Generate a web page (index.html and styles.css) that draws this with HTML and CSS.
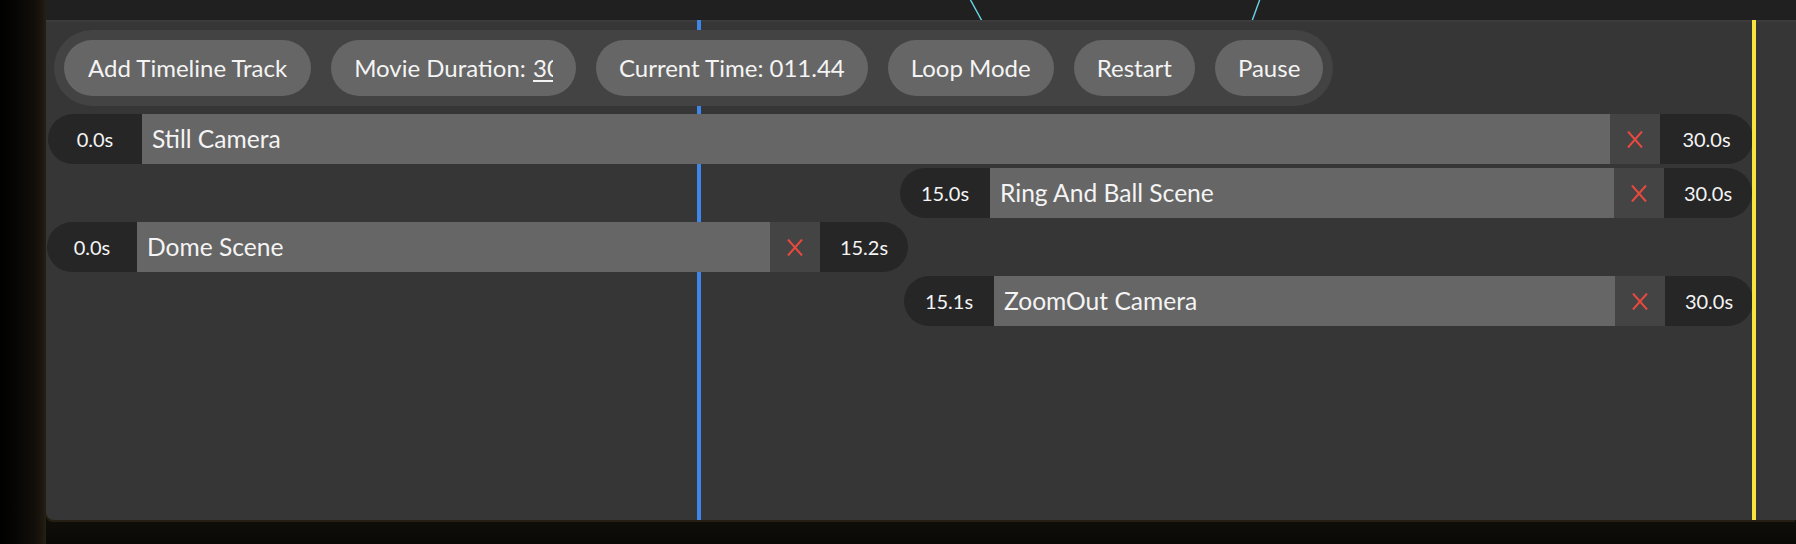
FILE: index.html
```html
<!DOCTYPE html>
<html lang="en">
<head>
<meta charset="utf-8">
<title>Timeline</title>
<link rel="stylesheet" href="styles.css">
</head>
<body>
<div class="app">
  <div class="side"></div>
  <div class="main">
    <div class="scene">
      <svg class="scene-lines" width="1750" height="20" viewBox="0 0 1750 20">
        <line x1="924" y1="-1" x2="936" y2="21" />
        <line x1="1214" y1="-1" x2="1206" y2="21" />
      </svg>
    </div>
    <div class="panel">
      <div class="playhead"></div>
      <div class="end-marker"></div>
      <div class="toolbar">
        <button class="btn">Add Timeline Track</button>
        <div class="btn">Movie Duration: <span class="duration-input">30.00</span></div>
        <div class="btn">Current Time: 011.44</div>
        <button class="btn">Loop Mode</button>
        <button class="btn">Restart</button>
        <button class="btn">Pause</button>
      </div>
      <div class="tracks">
        <div class="row">
          <div class="track track--wide" style="margin-left:2px;width:1705px">
            <div class="time time--start">0.0s</div>
            <div class="name">Still Camera</div>
            <div class="remove"><svg width="16" height="17" viewBox="0 0 16 17"><path d="M1 0.5 L15 16.5 M15 0.5 L1 16.5"/></svg></div>
            <div class="time time--end">30.0s</div>
          </div>
        </div>
        <div class="row">
          <div class="track" style="margin-left:854px;width:852px">
            <div class="time time--start">15.0s</div>
            <div class="name">Ring And Ball Scene</div>
            <div class="remove"><svg width="16" height="17" viewBox="0 0 16 17"><path d="M1 0.5 L15 16.5 M15 0.5 L1 16.5"/></svg></div>
            <div class="time time--end">30.0s</div>
          </div>
        </div>
        <div class="row">
          <div class="track" style="margin-left:1px;width:861px">
            <div class="time time--start">0.0s</div>
            <div class="name">Dome Scene</div>
            <div class="remove"><svg width="16" height="17" viewBox="0 0 16 17"><path d="M1 0.5 L15 16.5 M15 0.5 L1 16.5"/></svg></div>
            <div class="time time--end">15.2s</div>
          </div>
        </div>
        <div class="row">
          <div class="track" style="margin-left:858px;width:849px">
            <div class="time time--start">15.1s</div>
            <div class="name">ZoomOut Camera</div>
            <div class="remove"><svg width="16" height="17" viewBox="0 0 16 17"><path d="M1 0.5 L15 16.5 M15 0.5 L1 16.5"/></svg></div>
            <div class="time time--end">30.0s</div>
          </div>
        </div>
      </div>
    </div>
    <div class="below"></div>
  </div>
</div>
</body>
</html>
```
FILE: styles.css
```css
* { box-sizing: border-box; }
html, body { margin: 0; padding: 0; }
body {
  width: 1796px;
  height: 544px;
  overflow: hidden;
  background: #0d0b07;
  font-family: "Lato", "Noto Sans", sans-serif;
  color: #f4f4f4;
}
.app { display: flex; height: 544px; }
.side {
  width: 46px;
  flex: none;
  background: linear-gradient(to right, #000 0%, #070604 35%, #120e09 75%, #1b160e 90%, #262014 100%);
}
.main { flex: 1; display: flex; flex-direction: column; min-width: 0; }
.scene { height: 20px; background: #202020; position: relative; overflow: hidden; }
.scene-lines { display: block; }
.scene-lines line { stroke: #68d6e6; stroke-width: 1.4; }
.panel {
  position: relative;
  height: 500px;
  background: #363636;
  border-top: 2px solid #3c3c3c;
  border-bottom-left-radius: 8px;
  box-shadow: -1px 2px 0 #241e13;
  padding: 8px 0 0 8px;
}
.below {
  flex: 1;
  background: linear-gradient(to bottom, #100e09, #0a0906);
}
.playhead {
  position: absolute;
  left: 651px;
  top: -2px;
  bottom: 0;
  width: 4px;
  background: #3f86ec;
}
.end-marker {
  position: absolute;
  left: 1706px;
  top: -2px;
  bottom: 0;
  width: 4px;
  background: #f7e43c;
  z-index: 3;
}
.toolbar {
  position: relative;
  z-index: 1;
  display: inline-flex;
  gap: 20px;
  padding: 10px;
  background: #434343;
  border-radius: 38px;
}
.btn {
  height: 56px;
  display: flex;
  align-items: center;
  padding: 0 23px 2px;
  border: none;
  border-radius: 28px;
  background: #666;
  color: #f4f4f4;
  font-family: inherit;
  font-size: 24px;
  white-space: pre;
}
.btn:first-child { padding: 0 24px 2px 24px; }
.duration-input {
  display: inline-block;
  width: 20px;
  overflow: hidden;
  text-decoration: underline;
  text-decoration-thickness: 2px;
  text-underline-offset: 3px;
  vertical-align: bottom;
  margin-left: 1px;
}
.tracks {
  position: relative;
  z-index: 2;
  margin: 8px 0 0 -8px;
  display: flex;
  flex-direction: column;
  gap: 4px;
}
.row { display: flex; height: 50px; }
.track { display: flex; height: 50px; flex: none; }
.time {
  flex: none;
  width: 90px;
  display: flex;
  align-items: center;
  justify-content: center;
  padding-bottom: 1px;
  background: #262626;
  font-size: 20px;
}
.time--start { border-radius: 25px 0 0 25px; }
.time--end { width: 88px; border-radius: 0 25px 25px 0; }
.track--wide .time--start { width: 94px; }
.track--wide .time--end { width: 93px; }
.name {
  flex: 1;
  min-width: 0;
  display: flex;
  align-items: center;
  padding: 0 0 2px 10px;
  background: #666;
  font-size: 24.6px;
  white-space: nowrap;
  overflow: hidden;
}
.remove {
  flex: none;
  width: 50px;
  display: flex;
  align-items: center;
  justify-content: center;
  background: #444;
}
.remove svg { display: block; }
.remove path { stroke: #e8493f; stroke-width: 2; fill: none; }
```
